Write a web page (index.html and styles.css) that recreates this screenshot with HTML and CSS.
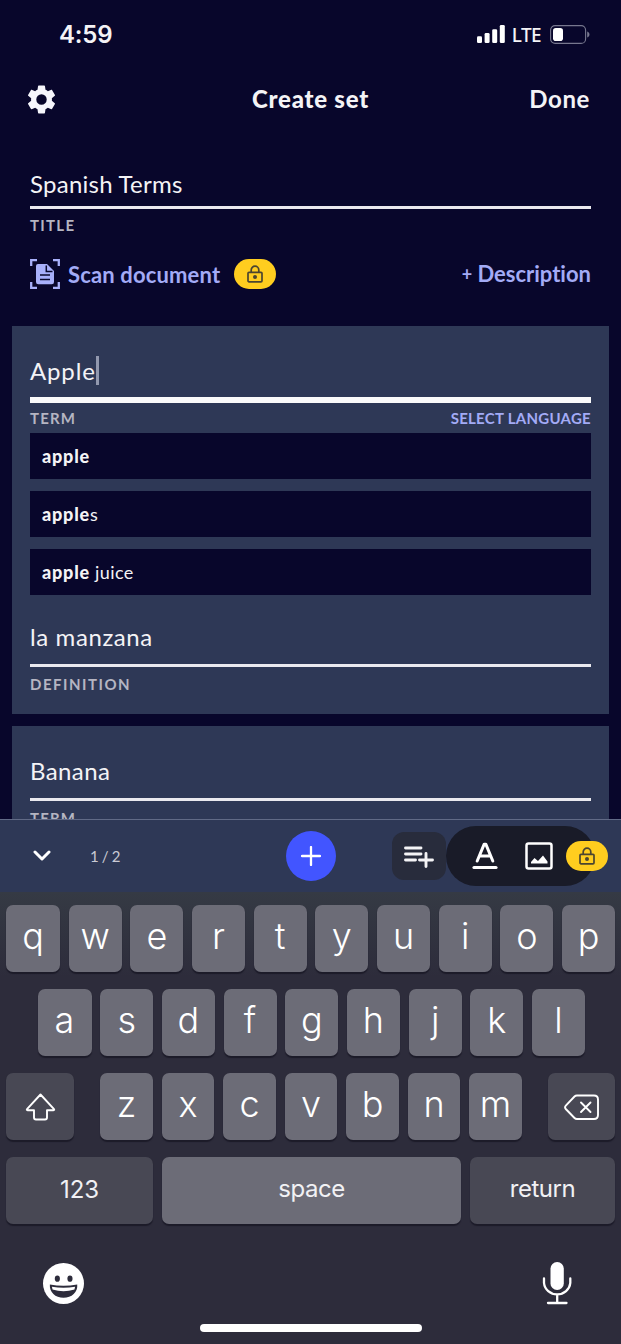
FILE: index.html
```html
<!DOCTYPE html>
<html lang="en">
<head>
<meta charset="utf-8">
<title>Create set</title>
<link rel="stylesheet" href="styles.css">
</head>
<body>
<svg class="defs" width="0" height="0" aria-hidden="true">
  <symbol id="lock" viewBox="0 0 18 18">
    <rect x="2" y="7.3" width="14" height="9.500" rx="1" fill="none" stroke="currentColor" stroke-width="1.7"/>
    <path d="M5.200 7V5a3.800 3.800 0 0 1 7.600 0V7" fill="none" stroke="currentColor" stroke-width="1.7"/>
    <circle cx="9" cy="12" r="2" fill="currentColor"/>
  </symbol>
</svg>
<div class="app">
  <header class="status">
    <span class="clock">4:59</span>
    <div class="indicators">
      <svg class="signal" viewBox="0 0 28 18" fill="#fff"><rect x="0" y="11.3" width="5" height="6.7" rx="1.3"/><rect x="7.6" y="8" width="5" height="10" rx="1.3"/><rect x="15.2" y="4.3" width="5" height="13.7" rx="1.3"/><rect x="22.8" y="0" width="5" height="18" rx="1.3"/></svg>
      <span class="lte">LTE</span>
      <svg class="battery" viewBox="0 0 40 19"><rect x=".6" y=".6" width="35" height="17.8" rx="4.5" fill="none" stroke="#77778e" stroke-width="1.1"/><rect x="3" y="3" width="10" height="13" rx="2.8" fill="#fff"/><path d="M37.2 6.5c3 1 3 5 0 6z" fill="#77778e"/></svg>
    </div>
  </header>
  <nav class="nav">
    <svg class="gear" viewBox="2 2 20 20" fill="#f6f6fc"><path d="M19.14 12.94c.04-.3.06-.61.06-.94s-.02-.64-.07-.94l2.03-1.58c.18-.14.23-.41.12-.61l-1.92-3.32c-.12-.22-.37-.29-.59-.22l-2.39.96c-.5-.38-1.03-.7-1.62-.94l-.36-2.54c-.04-.24-.24-.41-.48-.41h-3.84c-.24 0-.43.17-.47.41l-.36 2.54c-.59.24-1.13.57-1.62.94l-2.39-.96c-.22-.08-.47 0-.59.22L2.74 8.87c-.12.21-.08.47.12.61l2.03 1.58c-.05.3-.09.63-.09.94s.02.64.07.94l-2.03 1.58c-.18.14-.23.41-.12.61l1.92 3.32c.12.22.37.29.59.22l2.39-.96c.5.38 1.03.7 1.62.94l.36 2.54c.05.24.24.41.48.41h3.84c.24 0 .44-.17.47-.41l.36-2.54c.59-.24 1.13-.56 1.62-.94l2.39.96c.22.08.47 0 .59-.22l1.92-3.32c.12-.22.07-.47-.12-.61l-2.01-1.58zM12 15.6A3.6 3.6 0 1 1 12 8.4a3.6 3.6 0 0 1 0 7.2z"/></svg>
    <h1 class="heading">Create set</h1>
    <span class="done">Done</span>
  </nav>
  <main class="content">
    <section class="intro">
      <div class="field title-field"><span class="value v-title">Spanish Terms</span></div>
      <span class="label l-title">TITLE</span>
      <div class="actions">
        <svg class="scan" viewBox="0 0 30 30"><path d="M1.200 7V1.200H7M23 1.200h5.800V7M28.800 23v5.800H23M7 28.800H1.200V23" fill="none" stroke="#a8b0fb" stroke-width="2.300"/><path d="M8 5h9l7 7v11a2.300 2.300 0 0 1-2.300 2.300H8.300A2.300 2.300 0 0 1 6 23V7a2 2 0 0 1 2-2z" fill="#a8b0fb"/><path d="M16.300 6.500V12.600H22.500M10 16h10M10 20.500h10" fill="none" stroke="#0a092d" stroke-width="1.500"/></svg>
        <span class="scan-text">Scan document</span>
        <span class="badge"><svg><use href="#lock"/></svg></span>
        <span class="desc"><span class="plus">+</span> Description</span>
      </div>
    </section>
    <section class="card">
      <div class="field term-field focused"><span class="value v-apple">Apple</span><i class="caret"></i></div>
      <div class="label-row"><span class="label l-term">TERM</span><span class="language">SELECT LANGUAGE</span></div>
      <ul class="suggestions">
        <li><b>apple</b></li>
        <li><b>apple</b>s</li>
        <li><b>apple</b> juice</li>
      </ul>
      <div class="field definition-field"><span class="value v-manzana">la manzana</span></div>
      <div class="label-row"><span class="label l-def">DEFINITION</span></div>
    </section>
    <section class="card">
      <div class="field term-field"><span class="value v-banana">Banana</span></div>
      <div class="label-row second"><span class="label l-term">TERM</span></div>
    </section>
  </main>
  <div class="toolbar">
    <svg class="chevron" viewBox="0 0 18 12"><path d="M2 2l7 7 7-7" fill="none" stroke="#fff" stroke-width="3" stroke-linecap="round" stroke-linejoin="round"/></svg>
    <span class="count">1 / 2</span>
    <span class="add"><svg viewBox="0 0 20 20"><path d="M10 1v18M1 10h18" stroke="#fff" stroke-width="2.300" stroke-linecap="round"/></svg></span>
    <span class="list-add"><svg viewBox="0 0 30 22"><path d="M1.500 2h15.500M1.500 8h15.500M1.500 14h10M15.500 14h13M22 7.500v13" stroke="#f4f4f6" stroke-width="2.900" stroke-linecap="round" fill="none"/></svg></span>
    <div class="format">
      <svg class="text-icon" viewBox="0 0 26 28"><path d="M5.200 19L12.200 2.200h1.600L20.800 19M7.500 14h11" fill="none" stroke="#fff" stroke-width="3" stroke-linecap="round" stroke-linejoin="round"/><path d="M2 25.500h22" stroke="#fff" stroke-width="3.200" stroke-linecap="round"/></svg>
      <svg class="image-icon" viewBox="0 0 28 28"><rect x="1.500" y="1.500" width="25" height="25" rx="2" fill="none" stroke="#fff" stroke-width="2.500"/><path d="M6 21.500v-1.500l3.500-4 3.500 3 5-5.500 4.500 6v2z" fill="#fff"/></svg>
      <span class="badge format-badge"><svg><use href="#lock"/></svg></span>
    </div>
  </div>
  <div class="keyboard">
    <div class="row row1"><span class="key">q</span><span class="key">w</span><span class="key">e</span><span class="key">r</span><span class="key">t</span><span class="key">y</span><span class="key">u</span><span class="key">i</span><span class="key">o</span><span class="key">p</span></div>
    <div class="row row2"><span class="key">a</span><span class="key">s</span><span class="key">d</span><span class="key">f</span><span class="key">g</span><span class="key">h</span><span class="key">j</span><span class="key">k</span><span class="key">l</span></div>
    <div class="row row3">
      <span class="key dark"><svg class="shift" viewBox="0 0 31 28"><path d="M15.500 1.500L29 16.200q.7 1-.5 1H22v7.300q0 2-2 2h-9q-2 0-2-2v-7.300H2.500q-1.200 0-.5-1z" fill="none" stroke="#fff" stroke-width="1.900" stroke-linejoin="round"/></svg></span>
      <div class="letters"><span class="key">z</span><span class="key">x</span><span class="key">c</span><span class="key">v</span><span class="key">b</span><span class="key">n</span><span class="key">m</span></div>
      <span class="key dark"><svg class="delete" viewBox="0 0 36 27"><path d="M13 1.500h17q4 0 4 4v15.500q0 4-4 4H13q-1.500 0-2.500-1L1.800 15q-1.500-1.700 0-3.300L10.500 2.500q1-1 2.500-1z" fill="none" stroke="#fff" stroke-width="1.900"/><path d="M17 8.500l9.500 9.500M26.500 8.500L17 18" stroke="#fff" stroke-width="1.900" stroke-linecap="round"/></svg></span>
    </div>
    <div class="row row4"><span class="key dark word numbers">123</span><span class="key word">space</span><span class="key dark word">return</span></div>
    <div class="dock">
      <svg class="emoji" viewBox="0 0 40 40"><circle cx="20" cy="20" r="20" fill="#fff"/><ellipse cx="14" cy="15.300" rx="2.500" ry="3" fill="#2d2c3b"/><ellipse cx="26.300" cy="15.300" rx="2.500" ry="3" fill="#2d2c3b"/><path d="M6.700 21q13.300 2.500 26.700 0c.8 7.500-5.500 13-13.400 13S6 28.500 6.700 21z" fill="#2d2c3b"/><path d="M8.700 23.200q11.300 2 22.600 0l-.6 2.600q-10.700 3.400-21.400 0z" fill="#fff"/></svg>
      <svg class="mic" viewBox="0 0 30 44"><rect x="8.500" y="1" width="13.300" height="28" rx="6.600" fill="#fff"/><path d="M2 17.500v4.500a13.200 12.500 0 0 0 26.300 0v-4.500M15.200 34.500v7M6 42h18.500" fill="none" stroke="#fff" stroke-width="2.300" stroke-linecap="round"/></svg>
    </div>
    <div class="home"></div>
  </div>
</div>
</body>
</html>
```
FILE: styles.css
```css
* { box-sizing: border-box; }
body { margin: 0; background: #08062b; }
.defs { display: block; }
svg { display: block; flex: none; }
.app {
  width: 621px;
  height: 1344px;
  display: flex;
  flex-direction: column;
  overflow: hidden;
  background: #08062b;
  color: #f4f3f6;
  font-family: Lato, "Open Sans", sans-serif;
  font-variant-ligatures: none;
  white-space: nowrap;
}
.status {
  flex: none;
  height: 68px;
  padding: 0 31px 0 59px;
  display: flex;
  align-items: center;
  justify-content: space-between;
  font-family: Inter, sans-serif;
}
.clock { font-size: 24px; font-weight: 600; line-height: 30px; letter-spacing: -.2px; padding-top: 1px; }
.indicators { display: flex; align-items: center; }
.signal { width: 28px; height: 18px; }
.lte { margin: 2px 9px 0 7px; font-family: "Noto Sans", sans-serif; font-size: 19px; font-weight: 500; line-height: 24px; letter-spacing: -.6px; }
.battery { width: 40px; height: 19px; }
.nav {
  flex: none;
  height: 64px;
  padding: 0 31px 2px 27px;
  display: grid;
  grid-template-columns: 100px 1fr 100px;
  align-items: center;
}
.gear { width: 29px; height: 29px; }
.heading { margin: 0; text-align: center; font-size: 24px; font-weight: 900; line-height: 30px; letter-spacing: .75px; padding-left: 4px; }
.done { text-align: right; font-size: 24px; font-weight: 700; line-height: 30px; letter-spacing: .6px; }
.content { flex: none; height: 687px; overflow: hidden; }
.intro { height: 194px; padding: 34px 30px 0; }
.field { display: flex; border-bottom: 3px solid #eae9ef; }
.title-field { height: 43px; }
.value { font-size: 24px; line-height: 36px; }
.v-title { letter-spacing: .25px; }
.v-apple { letter-spacing: .85px; }
.v-manzana { letter-spacing: .6px; }
.v-banana { letter-spacing: .4px; }
.label { display: block; font-size: 15px; font-weight: 700; line-height: 20px; letter-spacing: 1.500px; color: #b5b5c2; }
.l-title { margin-top: 6px; letter-spacing: 1.300px; }
.l-term { letter-spacing: 1.200px; }
.actions { display: flex; align-items: center; height: 32px; margin-top: 23px; color: #a3abf6; font-size: 22px; font-weight: 700; line-height: 30px; }
.scan { width: 30px; height: 30px; }
.scan-text { margin-left: 8px; letter-spacing: .15px; padding-top: 1px; }
.badge { display: flex; flex: none; align-items: center; justify-content: center; width: 42px; height: 30px; margin-left: 14px; border-radius: 15px; background: #ffcd1f; color: #4b4530; }
.badge svg { width: 18px; height: 18px; }
.desc { margin-left: auto; }
.plus { font-size: 18px; vertical-align: 1px; }
.card { height: 388px; margin: 0 12px 12px; padding: 27px 18px 0; background: #2e3856; }
.term-field { height: 48px; padding-bottom: 6px; }
.focused { height: 50px; border-bottom: 6px solid #fafafa; padding: 0; }
.caret { width: 3px; height: 29px; margin-top: 3px; background: #9298ae; }
.label-row { display: flex; justify-content: space-between; align-items: center; height: 30px; }
.second { height: 34px; }
.language { font-size: 15px; font-weight: 700; line-height: 20px; letter-spacing: .27px; color: #a3abf6; }
.suggestions { list-style: none; margin: 0; padding: 0; display: grid; gap: 12px; }
.suggestions li { height: 46px; padding-left: 12px; background: #08062b; font-size: 18px; line-height: 46px; letter-spacing: .4px; }
.suggestions b { font-weight: 900; letter-spacing: .8px; }
.definition-field { height: 72px; padding-top: 24px; }
.definition-field + .label-row { height: 34px; }
.toolbar { flex: none; height: 73px; display: flex; align-items: center; border-top: 1px solid #616a86; background: #2e3856; }
.chevron { width: 18px; height: 12px; margin-left: 33px; }
.count { width: 30px; margin-left: 39px; font-size: 15px; line-height: 20px; letter-spacing: -.5px; word-spacing: .3px; color: #c9cad4; }
.add { display: flex; align-items: center; justify-content: center; width: 50px; height: 50px; margin-left: 166px; border-radius: 50%; background: #4255ff; }
.add svg { width: 20px; height: 20px; }
.list-add { display: flex; align-items: center; justify-content: center; width: 54px; height: 48px; margin-left: 56px; border-radius: 12px; background: #282c3c; }
.list-add svg { width: 30px; height: 22px; margin-top: 2px; }
.format { position: relative; display: flex; align-items: center; width: 149px; height: 60px; padding-left: 25px; border-radius: 30px; background: #191b28; }
.text-icon { width: 26px; height: 28px; margin-left: 1px; }
.image-icon { width: 28px; height: 28px; margin-left: 27px; }
.format-badge { position: absolute; left: 120px; top: 15px; margin: 0; }
.keyboard { flex: 1; display: flex; flex-direction: column; background: linear-gradient(#353a44, #2d2c3b 85px); font-family: Inter, sans-serif; color: #fff; padding: 12.500px 6px 0; }
.row { flex: none; display: grid; height: 67px; gap: 8.700px; margin-bottom: 17px; }
.row1 { grid-template-columns: 54px repeat(9, 1fr); }
.row2 { grid-template-columns: 54px repeat(8, 1fr); margin-left: 31.500px; margin-right: 30px; }
.row3 { grid-template-columns: 67.500px 422px 67.500px; gap: 0; justify-content: space-between; }
.letters { display: grid; grid-template-columns: repeat(7, 1fr); gap: 8.700px; margin: 0 -.5px 0 .5px; }
.row4 { grid-template-columns: 147px 299px 145px; gap: 9px; }
.key { display: flex; align-items: center; justify-content: center; border-radius: 7px; background: #6c6c77; box-shadow: 0 1.500px 1px #1c1b29; font-size: 36px; font-weight: 300; line-height: 44px; padding-bottom: 5px; }
.dark { background: #484854; }
.dark svg { margin: 7px 0 0 1px; }
.shift { width: 31px; height: 28px; }
.delete { width: 36px; height: 27px; }
.word { font-size: 24px; font-weight: 400; letter-spacing: -.5px; color: #f1f1f4; padding-bottom: 3px; }
.numbers { padding-bottom: 0; letter-spacing: 0; }
.dock { display: flex; justify-content: space-between; align-items: flex-start; height: 83px; padding: 20px 43px 0 37px; }
.emoji { width: 41px; height: 41px; margin-top: 2px; }
.mic { width: 30px; height: 44px; }
.home { align-self: center; width: 222px; height: 8px; border-radius: 4px; background: #fff; }
```
